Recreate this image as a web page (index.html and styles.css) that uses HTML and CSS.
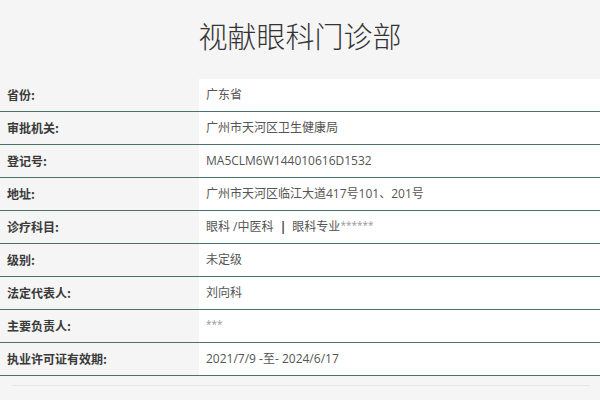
FILE: index.html
```html
<!DOCTYPE html>
<html lang="zh">
<head>
<meta charset="utf-8">
<link rel="stylesheet" href="styles.css">
</head>
<body>
<div class="page">
  <h1 class="title">视献眼科门诊部</h1>
  <div class="table">
    <div class="row"><div class="label">省份:</div><div class="value">广东省</div></div>
    <div class="row"><div class="label">审批机关:</div><div class="value">广州市天河区卫生健康局</div></div>
    <div class="row"><div class="label">登记号:</div><div class="value">MA5CLM6W144010616D1532</div></div>
    <div class="row"><div class="label">地址:</div><div class="value">广州市天河区临江大道417号101、201号</div></div>
    <div class="row"><div class="label">诊疗科目:</div><div class="value">眼科 /中医科 <span class="sep">|</span> 眼科专业<span class="stars">******</span></div></div>
    <div class="row"><div class="label">级别:</div><div class="value">未定级</div></div>
    <div class="row"><div class="label">法定代表人:</div><div class="value">刘向科</div></div>
    <div class="row"><div class="label">主要负责人:</div><div class="value"><span class="stars">***</span></div></div>
    <div class="row"><div class="label">执业许可证有效期:</div><div class="value">2021/7/9 -至- 2024/6/17</div></div>
  </div>
  <div class="footline"></div>
</div>
</body>
</html>
```

FILE: styles.css
```css
html, body {
  margin: 0;
  padding: 0;
  background: #f5f5f5;
}
body {
  font-family: "Noto Sans CJK SC", "Noto Sans", sans-serif;
  color: #333;
}
.page {
  width: 600px;
  height: 400px;
  overflow: hidden;
}
.title {
  margin: 0;
  height: 79px;
  line-height: 70px;
  text-align: center;
  font-size: 29px;
  font-weight: 300;
  color: #333;
}
.table {
  display: flex;
  flex-direction: column;
}
.row {
  display: grid;
  grid-template-columns: 199px 1fr;
  height: 33px;
  box-sizing: border-box;
  border-bottom: 1px solid #4b7264;
}
.label {
  padding-left: 7px;
  font-size: 12px;
  font-weight: 700;
  color: #3a3a3a;
  line-height: 32px;
  height: 32px;
  overflow: hidden;
  background: #f5f5f5;
}
.value {
  padding-left: 7px;
  font-family: "Open Sans", "Noto Sans CJK SC", sans-serif;
  font-size: 12px;
  color: #555;
  line-height: 32px;
  height: 32px;
  overflow: hidden;
  background: #fff;
}
.sep {
  font-weight: 700;
  margin: 0 3px;
  color: #444;
}
.stars {
  color: #999;
  font-size: 10px;
  position: relative;
  top: -2px;
}
.footline {
  margin: 9px 10px 0 12px;
  height: 1px;
  background: #e6e6e6;
}
```
